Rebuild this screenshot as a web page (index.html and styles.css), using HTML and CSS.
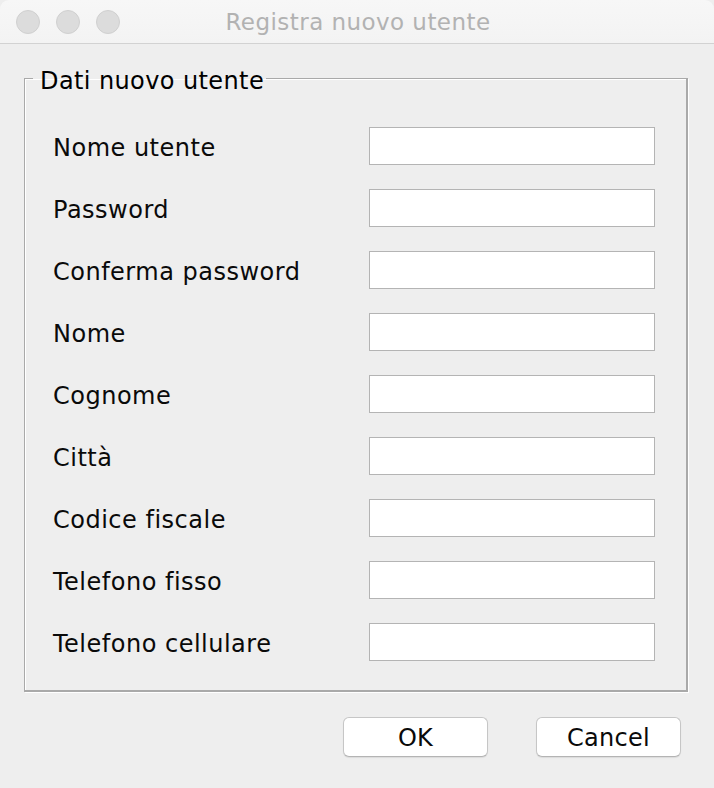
FILE: index.html
```html
<!DOCTYPE html>
<html lang="it">
<head>
<meta charset="utf-8">
<title>Registra nuovo utente</title>
<link rel="stylesheet" href="styles.css">
</head>
<body>
<div class="window">
  <div class="titlebar">
    <div class="lights">
      <span class="light"></span>
      <span class="light"></span>
      <span class="light"></span>
    </div>
    <div class="title">Registra nuovo utente</div>
  </div>
  <div class="content">
    <fieldset class="group">
      <legend class="group-title">Dati nuovo utente</legend>
      <div class="form">
        <label class="lbl">Nome utente</label><input class="field" type="text">
        <label class="lbl">Password</label><input class="field" type="password">
        <label class="lbl">Conferma password</label><input class="field" type="password">
        <label class="lbl">Nome</label><input class="field" type="text">
        <label class="lbl">Cognome</label><input class="field" type="text">
        <label class="lbl">Città</label><input class="field" type="text">
        <label class="lbl">Codice fiscale</label><input class="field" type="text">
        <label class="lbl">Telefono fisso</label><input class="field" type="text">
        <label class="lbl">Telefono cellulare</label><input class="field" type="text">
      </div>
    </fieldset>
    <div class="buttons">
      <button class="btn">OK</button>
      <button class="btn">Cancel</button>
    </div>
  </div>
</div>
</body>
</html>
```
FILE: styles.css
```css
html, body {
  margin: 0;
  padding: 0;
  background: #eeeeee;
}
body {
  font-family: "DejaVu Sans", sans-serif;
  width: 714px;
  height: 788px;
  overflow: hidden;
}
.window {
  width: 714px;
  height: 788px;
  background: #eeeeee;
  display: flex;
  flex-direction: column;
}
.titlebar {
  height: 43px;
  border-bottom: 1px solid #d2d2d2;
  background: linear-gradient(#f7f7f7, #f3f3f3);
  border-radius: 9px 9px 0 0;
  display: flex;
  align-items: center;
  position: relative;
}
.lights {
  display: flex;
  gap: 16px;
  padding-left: 16px;
}
.light {
  width: 22px;
  height: 22px;
  border-radius: 50%;
  background: #dcdcdc;
  border: 1px solid #d0d0d0;
}
.title {
  position: absolute;
  left: 0;
  right: 0;
  top: 0;
  bottom: 0;
  display: flex;
  align-items: center;
  justify-content: center;
  font-size: 23px;
  color: #b2b2b2;
  letter-spacing: 0.45px;
  padding-left: 2px;
}
.content {
  padding: 17px 26px 0 24px;
  display: flex;
  flex-direction: column;
}
.group {
  margin: 0;
  padding: 32px 29px 29px 28px;
  border-style: solid;
  border-color: #a9a9a9;
  border-width: 1px 2px 2px 1px;
  box-shadow: 1px 1px 0 #ffffff, inset 1px 1px 0 #ffffff;
  min-width: 0;
}
.group-title {
  margin-left: -20px;
  padding: 6px 2px 0 7px;
  font-size: 24px;
  line-height: 28px;
  letter-spacing: 0.4px;
  color: #000;
}
.form {
  display: grid;
  grid-template-columns: 316px 286px;
  grid-auto-rows: 38px;
  row-gap: 24px;
  align-items: center;
}
.lbl {
  font-size: 24px;
  letter-spacing: 0.5px;
  color: #0a0a0a;
  padding-top: 3px;
}
.field {
  box-sizing: border-box;
  width: 286px;
  height: 38px;
  margin: 0;
  border: 1px solid #b4b4b4;
  background: #fff;
  outline: none;
}
.buttons {
  display: flex;
  justify-content: flex-end;
  gap: 48px;
  padding: 25px 7px 0 0;
}
.btn {
  width: 145px;
  height: 40px;
  margin: 0;
  padding: 1px 0 0;
  background: #fff;
  border: 1px solid #c6c6c6;
  border-bottom-color: #b4b4b4;
  border-radius: 6px;
  box-shadow: 0 1px 1px rgba(0,0,0,0.08);
  font-family: "DejaVu Sans", sans-serif;
  font-size: 24px;
  letter-spacing: 0.3px;
  color: #0a0a0a;
}
```
